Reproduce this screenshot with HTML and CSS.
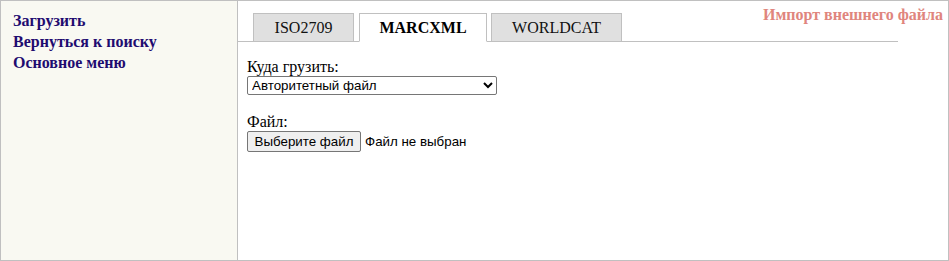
FILE: index.html
```html
<!DOCTYPE html>
<html lang="ru">
<head>
    <meta charset="UTF-8">
    <title>Импорт внешнего файла</title>
    <link rel="stylesheet" href="styles.css">
</head>
<body>
    <div id="frame">
        <div id="menu">
            <a href="#">Загрузить</a>
            <a href="#">Вернуться к поиску</a>
            <a href="#">Основное меню</a>
        </div>

        <div id="main">
            <div id="title">Импорт внешнего файла</div>

            <div class="tabs">
                <div class="tab tab-iso">ISO2709</div>
                <div class="tab tab-marc active">MARCXML</div>
                <div class="tab tab-wc">WORLDCAT</div>
            </div>

            <form id="import-form">
                <label for="target">Куда грузить:</label>
                <select id="target" name="target">
                    <option>Авторитетный файл</option>
                    <option>Библиографический файл</option>
                </select>

                <label for="file">Файл:</label>
                <div class="file-row">
                    <button type="button" class="file-btn">Выберите файл</button>
                    <span class="file-name">Файл не выбран</span>
                </div>
            </form>
        </div>
    </div>
</body>
</html>
```

FILE: styles.css
```css
body {
    margin: 0;
    font-family: 'Liberation Serif', 'Times New Roman', serif;
    font-size: 16px;
    background-color: #ffffff;
}

#frame {
    display: flex;
    height: 261px;
    box-sizing: border-box;
    border: 1px solid #c0c0c0;
}

/* left menu */
#menu {
    width: 224px;
    padding: 9px 0 0 12px;
    background-color: #f9f9f2;
    border-right: 1px solid #c0c0c0;
    display: flex;
    flex-direction: column;
}

#menu a {
    color: #1f0c70;
    font-weight: bold;
    text-decoration: none;
    line-height: 21px;
}

/* main part */
#main {
    flex: 1;
    position: relative;
}

#title {
    position: absolute;
    top: 5px;
    right: 5px;
    color: #e0857d;
    font-weight: bold;
}

.tabs {
    display: flex;
    margin: 12px 50px 0 0;
    padding-left: 15px;
    border-bottom: 1px solid #c0c0c0;
}

.tab {
    box-sizing: border-box;
    padding: 5px 0;
    text-align: center;
    line-height: 17px;
    background-color: #e0e0e0;
    border: 1px solid #c0c0c0;
    margin-bottom: -1px;
    color: #111;
}

.tab-iso {
    width: 101px;
    margin-right: 5px;
}

.tab-marc {
    width: 128px;
    margin-right: 4px;
}

.tab-wc {
    width: 131px;
}

.tab.active {
    background-color: #ffffff;
    border-bottom-color: #ffffff;
    font-weight: bold;
    color: #000;
}

#import-form {
    padding: 16px 0 0 9px;
}

#import-form label {
    display: block;
    line-height: 18px;
}

#target {
    display: block;
    width: 250px;
    height: 19px;
    margin-bottom: 18px;
    font-family: 'Liberation Sans', Arial, sans-serif;
    font-size: 13.33px;
    border: 1px solid #767676;
    border-radius: 2px;
    background-color: #fff;
    padding: 0;
}

.file-row {
    display: flex;
    align-items: center;
    gap: 4px;
    font-family: 'Liberation Sans', Arial, sans-serif;
    font-size: 13.33px;
}

.file-btn {
    height: 21px;
    width: 114px;
    padding: 0;
    font-family: 'Liberation Sans', Arial, sans-serif;
    font-size: 13.33px;
    background-color: #efefef;
    border: 1px solid #767676;
    border-radius: 2px;
    color: #000;
}
```
